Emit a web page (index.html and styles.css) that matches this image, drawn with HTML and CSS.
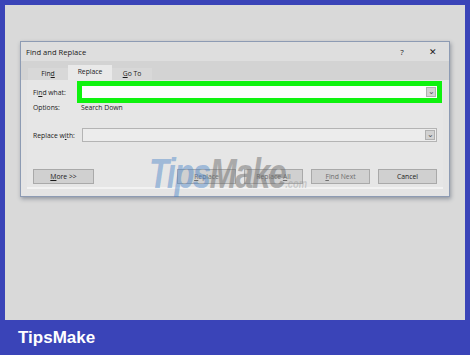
FILE: index.html
```html
<!DOCTYPE html>
<html>
  <head>
    <title>Find and Replace</title>
    <link rel="stylesheet" href="styles.css">
  </head>
  <body>
    <div class="frame">
      <div class="canvas">
        <div class="dialog">
          <div class="titlebar">
            <span class="title">Find and Replace</span>
            <span class="help">?</span>
            <span class="close">&#x2715;</span>
          </div>
          <div class="tabs">
            <div class="tab">Fin<u>d</u></div>
            <div class="tab active">Replace</div>
            <div class="tab"><u>G</u>o To</div>
          </div>
          <div class="panel">
            <div class="row find-row">
              <span class="label">Fi<u>n</u>d what:</span>
              <div class="field highlight">
                <span class="drop">&#x2304;</span>
              </div>
            </div>
            <div class="row options-row">
              <span class="label">Options:</span>
              <span class="value">Search Down</span>
            </div>
            <div class="row replace-row">
              <span class="label">Replace w<u>i</u>th:</span>
              <div class="field tall">
                <span class="drop">&#x2304;</span>
              </div>
            </div>
            <div class="buttons">
              <button class="btn more"><u>M</u>ore &gt;&gt;</button>
              <div class="spacer"></div>
              <button class="btn dim"><u>R</u>eplace</button>
              <button class="btn dim">Replace <u>A</u>ll</button>
              <button class="btn dim"><u>F</u>ind Next</button>
              <button class="btn">Cancel</button>
            </div>
          </div>
          <div class="watermark"><span class="wm-tips">Tips</span><span class="wm-make">Make</span><span class="wm-com">.com</span></div>
        </div>
      </div>
      <div class="footer">TipsMake</div>
    </div>
  </body>
</html>
```

FILE: styles.css
```css
* {
  box-sizing: border-box;
  margin: 0;
  padding: 0;
}

body {
  background: #3a44b8;
  font-family: "Open Sans", "Noto Sans", sans-serif;
  color: #1a1a1a;
}

.frame {
  width: 470px;
  height: 355px;
  padding: 5px 5px 0;
  background: #3a44b8;
}

.canvas {
  height: 315px;
  background: #d9d9d9;
  padding: 36px 0 0 15px;
}

.dialog {
  position: relative;
  width: 430px;
  height: 156px;
  background: #e4e4e4;
  border: 1px solid #8d9bb3;
  box-shadow: 1px 2px 4px rgba(60, 70, 90, 0.45);
}

.titlebar {
  display: flex;
  align-items: center;
  height: 19px;
  padding: 0 0 0 5px;
  background: #dedede;
  font-size: 7.6px;
}

.title {
  flex: 1;
}

.help {
  width: 30px;
  font-size: 8px;
  text-align: center;
}

.close {
  width: 32px;
  font-size: 9px;
  text-align: center;
}

.tabs {
  display: flex;
  align-items: flex-end;
  height: 19px;
  padding-left: 7px;
  background: #d3d3d3;
}

.tab {
  height: 12px;
  padding: 0 12px;
  font-size: 6.8px;
  line-height: 12px;
  background: #d8d8d8;
  text-align: center;
}

.tab:first-child {
  width: 40px;
}

.tab.active {
  height: 15px;
  width: 44px;
  padding: 0;
  line-height: 14px;
  background: #e9e9e9;
}

.tab:last-child {
  width: 40px;
  padding: 0;
}

.panel {
  height: 109px;
  margin: 0 6px;
  padding: 6px 0 0 6px;
  background: #e6e6e6;
  border-bottom: 2px solid #f2f2f2;
}

.row {
  display: flex;
  align-items: center;
  font-size: 6.8px;
}

.label {
  width: 49px;
}

.field {
  position: relative;
  width: 355px;
  height: 12px;
  background: #fcfcfc;
}

.highlight {
  box-shadow: 0 0 0 5px #0ef20e;
}

.tall {
  height: 14px;
  background: #ececec;
  border: 1px solid #b4b4b4;
}

.drop {
  position: absolute;
  right: 1px;
  top: 1px;
  bottom: 1px;
  width: 10px;
  background: #d2d2d2;
  border: 1px solid #b0b0b0;
  font-size: 8px;
  line-height: 6px;
  text-align: center;
  color: #555;
}

.options-row {
  margin-top: 3px;
  height: 12px;
}

.value {
  margin-left: -1px;
}

.replace-row {
  margin-top: 15px;
}

.buttons {
  display: flex;
  margin-top: 27px;
  padding-right: 6px;
  gap: 8px;
}

.spacer {
  flex: 1;
}

.btn {
  width: 59px;
  height: 15px;
  font-family: inherit;
  font-size: 6.8px;
  background: #d0d0d0;
  border: 1px solid #a9a9a9;
  color: #1a1a1a;
}

.btn.more {
  width: 61px;
}

.btn.dim {
  color: #6e6e6e;
}

.watermark {
  position: absolute;
  left: 128px;
  top: 108px;
  font-family: "Liberation Sans", Arial, sans-serif;
  font-weight: bold;
  font-style: italic;
  font-size: 42px;
  letter-spacing: -2px;
  transform: scaleX(0.78);
  transform-origin: left top;
  pointer-events: none;
}

.wm-tips {
  color: rgba(70, 130, 200, 0.45);
}

.wm-make {
  color: rgba(110, 110, 110, 0.5);
}

.wm-com {
  font-size: 12px;
  letter-spacing: 0;
  color: rgba(150, 150, 150, 0.4);
}

.footer {
  height: 35px;
  padding-left: 13px;
  line-height: 35px;
  color: #fff;
  font-family: "Liberation Sans", Arial, sans-serif;
  font-weight: bold;
  font-size: 17px;
}
```
